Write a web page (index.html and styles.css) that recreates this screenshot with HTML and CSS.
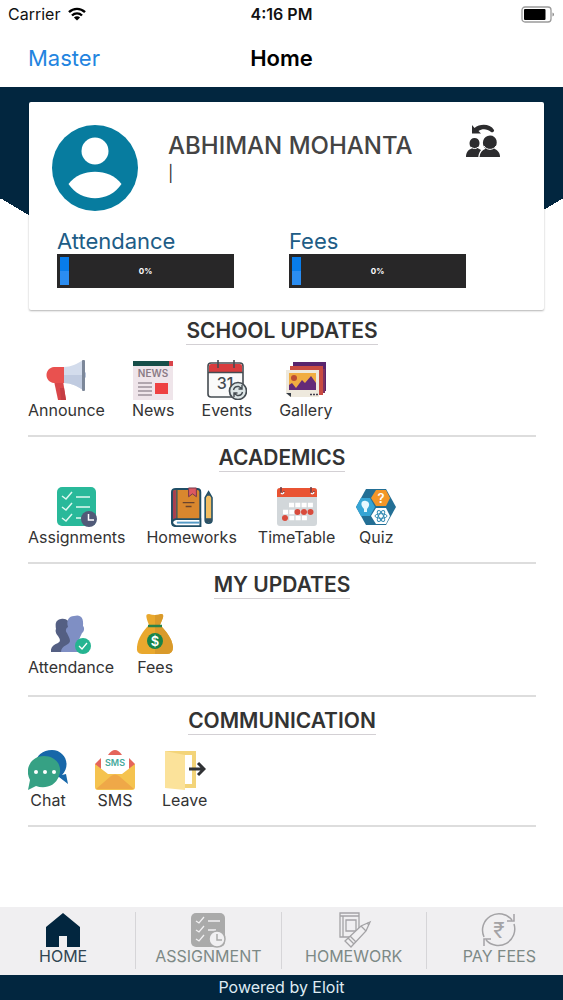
FILE: index.html
```html
<!DOCTYPE html>
<html lang="en">
<head>
    <meta charset="UTF-8">
    <meta name="viewport" content="width=device-width, initial-scale=1.0">
    <title>Home</title>
    <link rel="stylesheet" href="styles.css">
</head>
<body>
    <!-- Status bar -->
    <div class="status-bar">
        <div class="carrier">
            Carrier
            <svg width="18" height="14" viewBox="0 0 18 14" aria-hidden="true">
                <g fill="none" stroke="#000" stroke-width="2.4">
                    <path d="M1 5.2C5.500 .8 12.500 .8 17 5.200"/>
                    <path d="M4 8.500C6.800 5.700 11.200 5.700 14 8.500"/>
                </g>
                <path d="M9 13.500L5.900 10.400C7.600 8.900 10.400 8.900 12.100 10.400Z"/>
            </svg>
        </div>
        <div class="time">4:16 PM</div>
        <div class="battery">
            <svg width="34" height="17" viewBox="0 0 34 17" aria-hidden="true">
                <rect x="1" y="1" width="29" height="15" rx="3" fill="#fff" stroke="#9a9a9a" stroke-width="1.300"/>
                <rect x="3" y="3" width="21.500" height="11" rx="1"/>
                <path d="M31.500 6.500C33.500 7.300 33.500 9.700 31.500 10.500Z" fill="#888"/>
            </svg>
        </div>
    </div>

    <header class="nav-bar">
        <a class="back-link" href="#">Master</a>
        <h1 class="page-title">Home</h1>
    </header>

    <main class="content">
        <!-- Profile card -->
        <div class="hero">
            <div class="profile-card">
                <div class="profile-top">
                    <svg class="avatar" width="88" height="88" viewBox="0 0 88 88" role="img" aria-label="Profile">
                        <circle cx="44" cy="44" r="43" fill="#077c9f"/>
                        <circle cx="44" cy="27" r="13.500" fill="#fff"/>
                        <path d="M17.500 60C29 43.500 59 43.500 70.500 60C58 79 30 79 17.500 60Z" fill="#fff"/>
                    </svg>
                    <div class="profile-name">
                        <h2 class="name">ABHIMAN MOHANTA</h2>
                        <div class="class-info">|</div>
                    </div>
                    <button class="switch-user" type="button" aria-label="Switch student">
                        <svg width="36" height="34" viewBox="0 0 36 34" fill="#2c2c2e">
                            <path d="M7 1L9.500 4C15-.5 25-.5 29 6C29.500 8 27 9 26 7.900C22 4.500 17 4.500 13.500 7L16 9.500H7Z"/>
                            <path d="M1 33C1 28 3.500 25.500 7 24.500C3 21 4 14 9.500 14C15 14 16 20.500 12.500 24L16 26C14.500 28 13.500 30 13.300 33Z"/>
                            <path d="M14.500 33C15 28.500 17 26 20.700 24.700C15.500 20.500 18 11.500 25 11.500C32 11.500 34 20 29 24.700C33 26 35 29 35 33Z"/>
                            <path d="M19 22C22 26.500 28 26.500 31 22M6 23.200C8.500 25 11 25 13 23.200" fill="none" stroke="#fff" stroke-width="1"/>
                        </svg>
                    </button>
                </div>
                <div class="meters">
                    <div class="meter">
                        <div class="meter-label" id="attendance-label">Attendance</div>
                        <div class="meter-bar" role="progressbar" aria-labelledby="attendance-label" aria-valuenow="0" aria-valuemin="0" aria-valuemax="100">
                            <div class="meter-fill"></div>
                            <span class="meter-value">0%</span>
                        </div>
                    </div>
                    <div class="meter">
                        <div class="meter-label" id="fees-label">Fees</div>
                        <div class="meter-bar" role="progressbar" aria-labelledby="fees-label" aria-valuenow="0" aria-valuemin="0" aria-valuemax="100">
                            <div class="meter-fill"></div>
                            <span class="meter-value">0%</span>
                        </div>
                    </div>
                </div>
            </div>
        </div>

        <section class="section wide">
            <h2 class="section-title">SCHOOL UPDATES</h2>
            <div class="items">
                <a class="item" href="#">
                    <svg width="40" height="40" viewBox="1 1 40 40">
                        <path d="M9 22H18L21 41H13Z" fill="#d94649"/>
                        <path d="M15 29H19L21 41H16Z" fill="#c53c43"/>
                        <path d="M9 8H19V24H9C-1 23-1 9 9 8Z" fill="#e9514f"/>
                        <path d="M19 8C26 8 32 5 38 1V31C32 27 26 24 19 24Z" fill="#d3dcec"/>
                        <path d="M19 16H38V31C32 27 26 24 19 24Z" fill="#c0cbe0"/>
                        <rect x="37" y="1" width="3" height="31" rx="1" fill="#7c8799"/>
                        <path d="M40 13Q44 16 40 19Z" fill="#bac6dc"/>
                    </svg>
                    Announce
                </a>
                <a class="item" href="#">
                    <svg width="40" height="40" viewBox="1 1 40 40">
                        <rect x="1" y="2" width="40" height="39" fill="#efe5ea"/>
                        <path d="M1 2H37V7H1Z" fill="#174f49"/>
                        <path d="M37 2H41V7H37Z" fill="#d9434a"/>
                        <text x="21" y="18" class="news-text">NEWS</text>
                        <path d="M6 24H20M6 28H20M6 32H20M6 36H20" stroke="#746873" stroke-width="1.200"/>
                        <rect x="23" y="24" width="13" height="11" fill="#ee4142"/>
                    </svg>
                    News
                </a>
                <a class="item" href="#">
                    <svg width="40" height="40" viewBox="1 1 40 40">
                        <rect x="2" y="4" width="35" height="34" rx="3" fill="#fafafa" stroke="#454c52" stroke-width="1.600"/>
                        <path d="M3 13V7Q3 5 5 5H34Q36 5 36 7V13Z" fill="#d83c3e"/>
                        <path d="M2 13.500H37M12 1V9M28 1V9" stroke="#454c52" stroke-width="1.600"/>
                        <text x="19" y="30" class="day-text">31</text>
                        <circle cx="32" cy="32" r="8.500" fill="#dce5e6" stroke="#454c52" stroke-width="1.700"/>
                        <path d="M27.500 31Q28.500 27 32.500 27.500L36 29.500M36 26V30H32.500M36.500 33Q35.500 37 31.500 36.500L28 34.500M28 38V34H31.500" fill="none" stroke="#454c52" stroke-width="1.400"/>
                    </svg>
                    Events
                </a>
                <a class="item" href="#">
                    <svg width="40" height="40" viewBox="1 1 40 40">
                        <path d="M8 3H41V32H8Z" fill="#59256d"/>
                        <path d="M5 7H38V36H5Z" fill="#c94c42"/>
                        <path d="M38 10H40V34H38Z" fill="#7f315e"/>
                        <path d="M1 11H34V38H5L1 34Z" fill="#eee9dd"/>
                        <path d="M4 14H31V31H4Z" fill="#f1ad42"/>
                        <path d="M4 26L7 24L11 29L17 21L20 24L26 17L31 24V31H4Z" fill="#642a78"/>
                        <circle cx="9" cy="19" r="3" fill="#bc4d32"/>
                        <path d="M1 34H6V38Z" fill="#343b45"/>
                        <path d="M25 35.500H33" stroke="#454050" stroke-width="1.500" stroke-dasharray="2 1"/>
                    </svg>
                    Gallery
                </a>
            </div>
        </section>

        <section class="section">
            <h2 class="section-title">ACADEMICS</h2>
            <div class="items">
                <a class="item" href="#">
                    <svg width="40" height="40" viewBox="1 1 40 40">
                        <rect x="1" y="1" width="39" height="39" rx="5" fill="#29b99a"/>
                        <path d="M6 10L10 13L16 6M6 21L10 24L16 17M6 32L10 35L16 28M20 11H34M20 21H34M20 32H25" fill="none" stroke="#dff9f1" stroke-width="1.500"/>
                        <circle cx="33" cy="33" r="8" fill="#515a78"/>
                        <path d="M32.500 28V34H38" fill="none" stroke="#fff" stroke-width="1.500"/>
                    </svg>
                    Assignments
                </a>
                <a class="item" href="#">
                    <svg width="42" height="40" viewBox="0 0 43 41">
                        <path d="M5 2H27Q30 2 30 5V40H4Q1 40 1 36V5Q1 2 5 2Z" fill="#d9872e" stroke="#204e66" stroke-width="2"/>
                        <path d="M2 5Q2 3 5 3V33H2Z" fill="#a83f50"/>
                        <path d="M6 3V33" stroke="#204e66" stroke-width="1.200"/>
                        <path d="M5 33H30V40H5C0 39 0 34 5 33Z" fill="#fff" stroke="#204e66" stroke-width="1.800"/>
                        <path d="M6 36.500H29" stroke="#559bc6" stroke-width="2"/>
                        <path d="M18 1H26V10L22 7L18 10Z" fill="#dd5961" stroke="#74384b" stroke-width="1"/>
                        <path d="M12 16H24M15 20H21" stroke="#69432e" stroke-width="1.500"/>
                        <path d="M35 11L38.500 5L42 11V34Q42 37 38.500 37Q35 37 35 34Z" fill="#f2bd61" stroke="#204e66" stroke-width="1.600"/>
                        <path d="M36.500 9L38.500 5L40.500 9ZM35 32H42V36H35Z" fill="#315163"/>
                    </svg>
                    Homeworks
                </a>
                <a class="item" href="#">
                    <svg width="40" height="40" viewBox="1 1 40 40">
                        <rect x="1" y="2" width="40" height="38" rx="3" fill="#d2d7da"/>
                        <path d="M1 11V5Q1 2 4 2H38Q41 2 41 5V11Z" fill="#e95332"/>
                        <path d="M5 1V6Q7 10 8 5M35 1V6Q37 10 38 5" fill="none" stroke="#6b3f48" stroke-width="1.500"/>
                        <path d="M5 7Q7 9 8 6M35 7Q37 9 38 6" fill="none" stroke="#fff" stroke-width="1.300"/>
                        <path d="M13 19H37M7 26H37M7 32H31" stroke="#fff" stroke-width="4.500" stroke-dasharray="5 1.300"/>
                        <g fill="#d84b3c">
                            <circle cx="21.500" cy="26" r="3"/><circle cx="28" cy="26" r="3"/>
                            <circle cx="34.500" cy="26" r="3"/><circle cx="9" cy="32" r="3"/>
                        </g>
                    </svg>
                    TimeTable
                </a>
                <a class="item" href="#">
                    <svg width="40" height="40" viewBox="1 1 40 40">
                        <path d="M11 3H31L41 21L31 39H11L1 21Z" fill="#236f95"/>
                        <path d="M6 12H15L20 21L15 30H6L1 21Z" fill="#36a5d5"/>
                        <path d="M21 4H31L35 12L31 20H21L16 12Z" fill="#f39628"/>
                        <path d="M21 22H31L35 30L31 38H21L16 30Z" fill="#fff"/>
                        <path d="M9 23C4 18 7 14 11 15C15 16 15 20 12 23V26H9Z" fill="#e6f8ff"/>
                        <text x="26" y="17" class="question-text">?</text>
                        <g fill="none" stroke="#338bb3">
                            <ellipse cx="26" cy="30" rx="6" ry="2.300"/>
                            <ellipse cx="26" cy="30" rx="6" ry="2.300" transform="rotate(60 26 30)"/>
                            <ellipse cx="26" cy="30" rx="6" ry="2.300" transform="rotate(120 26 30)"/>
                        </g>
                    </svg>
                    Quiz
                </a>
            </div>
        </section>

        <section class="section updates">
            <h2 class="section-title">MY UPDATES</h2>
            <div class="items">
                <a class="item" href="#">
                    <svg width="40" height="40" viewBox="1 1 40 40">
                        <path d="M1 39Q0 33 8 30C11 28 10 26 8 23C6 21 5 18 6 16C5 10 6 7 11 6C16 5 20 8 20 13V39Z" fill="#545f83"/>
                        <path d="M11 39C11 32 20 32 20 28C20 25 18 23 17 20C15 18 16 15 18 14C16 7 19 3 24 3C30 1 34 4 33 13C35 15 34 19 32 20C31 23 29 25 29 28V39Z" fill="#7f8fc4"/>
                        <circle cx="33" cy="33" r="8" fill="#25b491"/>
                        <path d="M29 33L32 36L37 30" fill="none" stroke="#fff" stroke-width="1.300"/>
                    </svg>
                    Attendance
                </a>
                <a class="item" href="#">
                    <svg width="40" height="40" viewBox="1 1 40 40">
                        <path d="M15 12C12 4 11 1 15 1Q21 3 27 1C31 1 29 5 26 12C32 18 38 25 39 34Q39 41 33 41H8Q2 41 3 34C4 25 9 18 15 12Z" fill="#e9a82d"/>
                        <path d="M21 2Q25 2 27 1C31 1 29 5 26 12C32 18 38 25 39 34Q39 41 33 41H21Z" fill="#d99a2b"/>
                        <path d="M14 13H28" stroke="#27834b" stroke-width="2.500"/>
                        <circle cx="21" cy="28" r="8" fill="#188348"/>
                        <text x="21" y="33" class="dollar-text">$</text>
                    </svg>
                    Fees
                </a>
            </div>
        </section>

        <section class="section communication wide">
            <h2 class="section-title">COMMUNICATION</h2>
            <div class="items">
                <a class="item" href="#">
                    <svg width="40" height="40" viewBox="1 1 40 40">
                        <path d="M35 26C45 15 37 1 25 1C12 1 5 12 12 20C17 29 26 31 32 28L41 35L39 25Z" fill="#1767a9"/>
                        <path d="M3 31C-3 20 4 7 17 7C29 7 36 17 32 27C28 38 17 40 9 37L1 41Z" fill="#36a184"/>
                        <g fill="#fff"><circle cx="9" cy="23" r="2"/><circle cx="18" cy="23" r="2"/><circle cx="27" cy="23" r="2"/></g>
                    </svg>
                    Chat
                </a>
                <a class="item" href="#">
                    <svg width="40" height="40" viewBox="1 1 40 40">
                        <path d="M1 15L7 9H35L41 15V30H1Z" fill="#e5655b"/>
                        <path d="M14 6Q21-4 28 6Z" fill="#e5655b"/>
                        <path d="M7 6H35V26H7Z" fill="#fff"/>
                        <text x="21" y="17" class="sms-text">SMS</text>
                        <path d="M1 15L14 25H28L41 15V38Q41 41 38 41H4Q1 41 1 38Z" fill="#f5c34f"/>
                        <path d="M2 40L17 27Q21 24 25 27L40 40Z" fill="#efa848"/>
                    </svg>
                    SMS
                </a>
                <a class="item" href="#">
                    <svg width="42" height="40" viewBox="0 0 42 40">
                        <path d="M1 1H32V38H1Z" fill="#f3d479"/>
                        <path d="M20 5H28V34H20Z" fill="#fff"/>
                        <path d="M1 1L21 5V40L1 38Z" fill="#fbe29a"/>
                        <path d="M25 19H40M34 13L40 19L34 25" fill="none" stroke="#303235" stroke-width="3"/>
                    </svg>
                    Leave
                </a>
            </div>
        </section>
    </main>

    <!-- Bottom tabs -->
    <nav class="tab-bar">
        <div class="tabs">
            <a class="tab active" href="#">
                <svg width="36" height="36" viewBox="0 0 36 36">
                    <path d="M1 15L18 1L35 15V35H22V24H14V35H1Z" fill="#02263f"/>
                </svg>
                HOME
            </a>
            <a class="tab" href="#">
                <svg width="36" height="36" viewBox="0 0 36 36">
                    <rect x="1" y="1" width="34" height="34" rx="5" fill="#aaa"/>
                    <path d="M6 9L9 11L14 5M6 18L9 20L14 14M6 27L9 29L14 23M18 9H30M18 18H26" fill="none" stroke="#f2f1f3" stroke-width="1.300"/>
                    <circle cx="27" cy="27" r="8" fill="#f1f0f2" stroke="#aaa" stroke-width="1.500"/>
                    <path d="M27 22V28H32" fill="none" stroke="#aaa" stroke-width="1.500"/>
                </svg>
                ASSIGNMENT
            </a>
            <a class="tab" href="#">
                <svg width="36" height="36" viewBox="0 0 36 36" fill="none" stroke="#a4a3a6" stroke-width="1.300">
                    <path d="M4 1H23V25H4ZM7 4V25M4 4H23M10 8H20V19H10Z"/>
                    <path d="M9 29L25 14L34 10L30 19L15 35Z" fill="#f1f0f2"/>
                    <path d="M12 26L18 32M14 24L20 30M25 14L30 19M31 11L33 13"/>
                </svg>
                HOMEWORK
            </a>
            <a class="tab" href="#">
                <svg width="36" height="36" viewBox="0 0 36 36" fill="none" stroke="#a4a3a6" stroke-width="1.500">
                    <path d="M31 8A16.500 16.500 0 0 0 3 25M5 28A16.500 16.500 0 0 0 33 12M33 2V9H26M3 34V27H10"/>
                    <text x="18" y="26" class="rupee-text">₹</text>
                </svg>
                PAY FEES
            </a>
        </div>
    </nav>
    <footer class="footer">Powered by Eloit</footer>
</body>
</html>
```
FILE: styles.css
```css
* {
    box-sizing: border-box;
}
body {
    display: flex;
    flex-direction: column;
    min-height: 100vh;
    margin: 0;
    font-family: Inter, "Liberation Sans", sans-serif;
    font-size: 16px;
    color: #333;
    background-color: #fff;
}
a {
    color: inherit;
    text-decoration: none;
}
h1, h2 {
    margin: 0;
}
svg {
    display: block;
    flex: none;
}

.status-bar {
    display: grid;
    grid-template-columns: 1fr auto 1fr;
    align-items: center;
    height: 28px;
    padding: 0 8px;
    color: #111;
}
.carrier {
    display: flex;
    align-items: center;
    gap: 8px;
}
.time {
    font-weight: 600;
}
.battery {
    display: flex;
    justify-content: flex-end;
}
.nav-bar {
    display: grid;
    grid-template-columns: 1fr auto 1fr;
    align-items: center;
    height: 59px;
    padding: 0 28px;
}
.back-link {
    font-size: 22px;
    color: #2384df;
}
.page-title {
    font-size: 22px;
    font-weight: 600;
    color: #000;
}

.content {
    flex: 1;
}
/* dark banner, its lower edge slopes to the middle behind the card */
.hero {
    padding: 15px 19px 0 29px;
    background: linear-gradient(to top right, transparent 50%, #02263f 50%) left 111px / 50% 168px no-repeat,
        linear-gradient(to top left, transparent 50%, #02263f 50%) right 111px / 50% 168px no-repeat,
        linear-gradient(#02263f, #02263f) top / 100% 112px no-repeat;
}
.profile-card {
    height: 208px;
    padding: 22px 43px 22px 22px;
    background-color: #fff;
    border-radius: 2px;
    box-shadow: 0 1px 2px rgba(0, 0, 0, 0.3);
}
.profile-top {
    display: flex;
    align-items: flex-start;
}
.profile-name {
    flex: 1;
    padding: 7px 0 0 29px;
}
.name {
    font-size: 24px;
    line-height: 30px;
    font-weight: 500;
    color: #444;
}
.class-info {
    font-size: 16px;
    line-height: 24px;
}
.switch-user {
    padding: 0;
    border: 0;
    background: none;
}
.meters {
    display: grid;
    grid-template-columns: 1fr 1fr;
    gap: 55px;
    padding: 16px 35px 0 6px;
}
.meter-label {
    font-size: 22px;
    line-height: 26px;
    color: #205c86;
}
.meter-bar {
    display: grid;
    align-items: center;
    height: 34px;
    padding: 3px;
    background-color: #282728;
}
.meter-fill,
.meter-value {
    grid-area: 1 / 1;
}
.meter-fill {
    width: 9px;
    height: 28px;
    background: linear-gradient(#087cea 50%, #2b8df1 50%);
}
.meter-value {
    justify-self: center;
    font-size: 8px;
    font-weight: 700;
    color: #fff;
}

.section {
    display: flex;
    flex-direction: column;
    align-items: center;
    height: 127px;
    margin: 0 27px 0 28px;
    padding-top: 8px;
    border-bottom: 2px solid #ddd;
}
.section-title {
    font-size: 21px;
    line-height: 26px;
    font-weight: 600;
    border-bottom: 1px solid #d3d0d4;
}
.items {
    display: flex;
    align-self: stretch;
    gap: 21px;
    margin-top: 15px;
}
.wide .items {
    gap: 27px;
}
.item {
    display: flex;
    flex-direction: column;
    align-items: center;
    line-height: 20px;
}
.updates {
    height: 133px;
}
.updates .item {
    gap: 3px;
}
.communication {
    height: 130px;
    padding-top: 11px;
}

.tab-bar {
    overflow: hidden;
    background-color: #f0eff1;
}
.tabs {
    display: grid;
    grid-template-columns: repeat(4, 1fr);
    height: 68px;
    margin: 0 -9px;
    padding: 5px 0 6px;
}
.tab {
    display: flex;
    flex-direction: column;
    align-items: center;
    line-height: 16px;
    color: #7d8986;
    border-right: 1px solid #d6d5d8;
}
.tab:last-child {
    border-right: 0;
}
.tab.active {
    color: #304552;
}
.footer {
    height: 25px;
    font-size: 16px;
    line-height: 25px;
    text-align: center;
    color: #dfebf3;
    background-color: #02263f;
}

/* lettering inside the icons */
.news-text,
.day-text,
.question-text,
.dollar-text,
.sms-text,
.rupee-text {
    text-anchor: middle;
    font-weight: 600;
}
.news-text {
    font-size: 10px;
    fill: #8b7b86;
}
.day-text {
    font-size: 16px;
    font-weight: 500;
    fill: #454c52;
}
.question-text {
    font-size: 13px;
    fill: #fff;
}
.dollar-text {
    font-size: 13px;
    fill: #fff;
}
.sms-text {
    font-size: 9px;
    fill: #45a99b;
}
.rupee-text {
    font-size: 21px;
    font-weight: 400;
    fill: #a4a3a6;
    stroke: none;
}
```
